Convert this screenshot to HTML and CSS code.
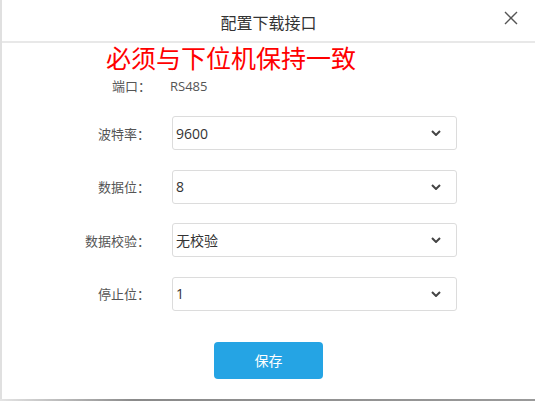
FILE: index.html
```html
<!DOCTYPE html>
<html lang="zh-CN">
<head>
  <meta charset="UTF-8" />
  <title>配置下载接口</title>
  <link rel="stylesheet" href="styles.css">
</head>
<body>
  <div class="dialog">
    <div class="dialog-header">
      <span class="dialog-title">配置下载接口</span>
      <span class="dialog-close">
        <svg width="14" height="14" viewBox="0 0 14 14">
          <path d="M1 1 L13 13 M13 1 L1 13" stroke="#555" stroke-width="1.4" fill="none" />
        </svg>
      </span>
    </div>

    <div class="dialog-body">
      <div class="warning">必须与下位机保持一致</div>
      <div class="port-row">
        <span class="port-label">端口：</span>
        <span class="port-value">RS485</span>
      </div>

      <div class="form-row">
        <label class="form-label">波特率：</label>
        <div class="select-box">
          <span>9600</span>
          <svg class="chevron" width="10" height="6" viewBox="0 0 10 6"><path d="M1 1 L5 5 L9 1" stroke="#444" stroke-width="2" fill="none" /></svg>
        </div>
      </div>
      <div class="form-row">
        <label class="form-label">数据位：</label>
        <div class="select-box">
          <span>8</span>
          <svg class="chevron" width="10" height="6" viewBox="0 0 10 6"><path d="M1 1 L5 5 L9 1" stroke="#444" stroke-width="2" fill="none" /></svg>
        </div>
      </div>
      <div class="form-row">
        <label class="form-label">数据校验：</label>
        <div class="select-box">
          <span>无校验</span>
          <svg class="chevron" width="10" height="6" viewBox="0 0 10 6"><path d="M1 1 L5 5 L9 1" stroke="#444" stroke-width="2" fill="none" /></svg>
        </div>
      </div>
      <div class="form-row">
        <label class="form-label">停止位：</label>
        <div class="select-box">
          <span>1</span>
          <svg class="chevron" width="10" height="6" viewBox="0 0 10 6"><path d="M1 1 L5 5 L9 1" stroke="#444" stroke-width="2" fill="none" /></svg>
        </div>
      </div>

      <div class="actions">
        <button class="btn-save">保存</button>
      </div>
    </div>
  </div>
  <div class="bottom-edge"></div>
</body>
</html>
```

FILE: styles.css
```css
:root {
  --border: #dcdcdc;
  --text: #333333;
  --label: #555555;
  --primary: #25a4e4;
}

body {
  margin: 0;
  background: #ffffff;
  font-family: "Open Sans", "Noto Sans CJK SC", sans-serif;
  color: var(--text);
}

.dialog {
  height: 399px;
  box-sizing: border-box;
  border-left: 2px solid #e0e0e0;
}

.dialog-header {
  height: 41px;
  border-bottom: 2px solid #e8e8e8;
  display: flex;
  align-items: center;
  position: relative;
}

.dialog-title {
  flex: 1;
  text-align: center;
  font-size: 16px;
  color: #333;
  margin-top: 3px;
}

.dialog-close {
  position: absolute;
  right: 17px;
  top: 11px;
  display: flex;
}

.dialog-body {
  padding-top: 3px;
}

.warning {
  margin-left: 104px;
  font-size: 25px;
  line-height: 25px;
  height: 25px;
  color: #ff0000;
}

.port-row {
  margin-top: 5px;
  padding-left: 110px;
  display: flex;
  font-size: 13px;
  line-height: 20px;
  height: 20px;
}

.port-label {
  width: 58px;
  color: var(--label);
}

.port-value {
  color: var(--label);
}

.form-row {
  display: flex;
  align-items: center;
  height: 34px;
  margin-top: 19.5px;
}

.port-row + .form-row {
  margin-top: 20px;
}

.form-label {
  width: 148px;
  text-align: right;
  font-size: 13px;
  color: var(--label);
}

.select-box {
  margin-left: 22px;
  width: 285px;
  height: 34px;
  box-sizing: border-box;
  border: 1px solid var(--border);
  border-radius: 3px;
  display: flex;
  align-items: center;
  justify-content: space-between;
  padding: 0 15px 0 3px;
  font-size: 14px;
  color: var(--text);
}

.chevron {
  display: block;
}

.actions {
  margin-top: 31px;
  padding-left: 212px;
}

.btn-save {
  width: 109px;
  height: 37px;
  border: none;
  border-radius: 4px;
  background: var(--primary);
  color: #ffffff;
  font-family: "Open Sans", "Noto Sans CJK SC", sans-serif;
  font-size: 14px;
  padding: 0;
}

.bottom-edge {
  height: 2px;
  background: linear-gradient(to right, #e4e4e4, #8a8a8a 25%, #9a9a9a);
}
```
